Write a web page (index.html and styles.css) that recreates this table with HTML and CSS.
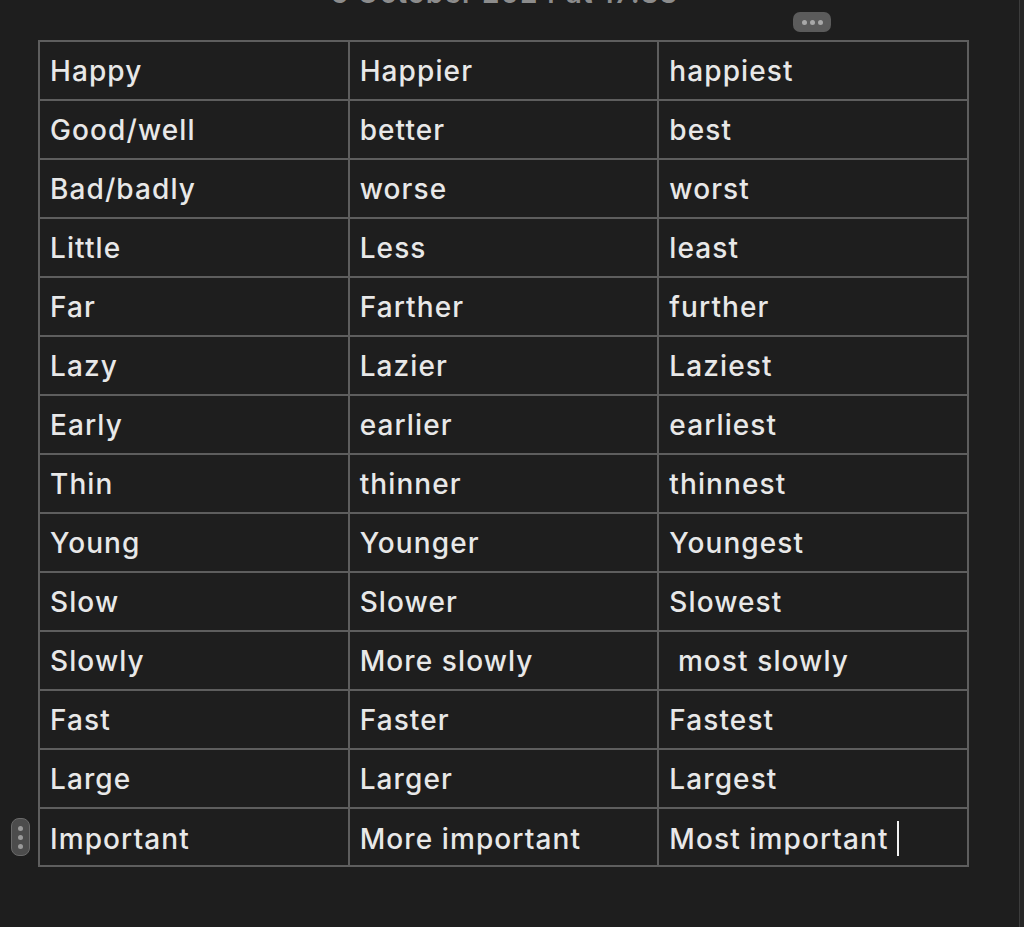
FILE: index.html
```html
<!DOCTYPE html>
<html lang="en">
<head>
<meta charset="utf-8">
<link rel="stylesheet" href="styles.css">
</head>
<body>
<div class="page">
  <div class="note">
    <header class="note-header">
      <div class="date">5 October 2024 at 17:33</div>
      <button class="more" aria-label="More"><span></span><span></span><span></span></button>
    </header>
    <div class="table-wrap">
      <table class="words">
        <tbody>
          <tr><td>Happy</td><td>Happier</td><td>happiest</td></tr>
          <tr><td>Good/well</td><td>better</td><td>best</td></tr>
          <tr><td>Bad/badly</td><td>worse</td><td>worst</td></tr>
          <tr><td>Little</td><td>Less</td><td>least</td></tr>
          <tr><td>Far</td><td>Farther</td><td>further</td></tr>
          <tr><td>Lazy</td><td>Lazier</td><td>Laziest</td></tr>
          <tr><td>Early</td><td>earlier</td><td>earliest</td></tr>
          <tr><td>Thin</td><td>thinner</td><td>thinnest</td></tr>
          <tr><td>Young</td><td>Younger</td><td>Youngest</td></tr>
          <tr><td>Slow</td><td>Slower</td><td>Slowest</td></tr>
          <tr><td>Slowly</td><td>More slowly</td><td>&nbsp;most slowly</td></tr>
          <tr><td>Fast</td><td>Faster</td><td>Fastest</td></tr>
          <tr><td>Large</td><td>Larger</td><td>Largest</td></tr>
          <tr class="active"><td class="first"><span class="handle"><span></span><span></span><span></span></span>Important</td><td>More important</td><td>Most important <span class="caret"></span></td></tr>
        </tbody>
      </table>
    </div>
  </div>
  <div class="scroll-edge"></div>
</div>
</body>
</html>
```

FILE: styles.css
```css
* { box-sizing: border-box; }
html, body {
  margin: 0;
  padding: 0;
  background: #1e1e1e;
  height: 100%;
}
body {
  font-family: Inter, "Noto Sans", "Liberation Sans", sans-serif;
  color: #e6e6e6;
  overflow: hidden;
}
.page {
  display: flex;
  height: 927px;
}
.note {
  flex: 1;
}
.scroll-edge {
  width: 5px;
  background: #262626;
  border-left: 1px solid #3c3c3c;
}
.note-header {
  position: relative;
  height: 40px;
  overflow: hidden;
}
.date {
  text-align: center;
  font-size: 28px;
  font-weight: 600;
  letter-spacing: 1px;
  color: #8c8c8c;
  line-height: 26px;
  margin-top: -20px;
  padding-right: 10px;
}
.more {
  position: absolute;
  left: 793px;
  top: 12px;
  width: 38px;
  height: 20px;
  border: none;
  border-radius: 7px;
  background: #5b5b5b;
  padding: 0;
  display: flex;
  align-items: center;
  justify-content: center;
  gap: 3px;
}
.more span {
  width: 5px;
  height: 5px;
  border-radius: 50%;
  background: #a8a8a8;
}
.table-wrap {
  padding-left: 38px;
}
.words {
  border-collapse: collapse;
  table-layout: fixed;
  width: 931px;
}
.words td {
  border: 2px solid #5e5e5e;
  height: 59px;
  padding: 0 8px 0 10px;
  font-size: 28px;
  font-weight: 500;
  letter-spacing: 1.1px;
  line-height: 30px;
  white-space: nowrap;
  color: #e8e8e8;
}
.words tr.active td {
  height: 58px;
  padding-top: 4px;
}
.first {
  position: relative;
}
.handle {
  position: absolute;
  left: -29px;
  top: 9px;
  width: 19px;
  height: 38px;
  border-radius: 8px;
  background: #4c4c4c;
  border: 1px solid #6a6a6a;
  display: flex;
  flex-direction: column;
  align-items: center;
  justify-content: center;
  gap: 4px;
}
.handle span {
  width: 5px;
  height: 5px;
  border-radius: 50%;
  background: #9a9a9a;
}
.caret {
  display: inline-block;
  width: 2px;
  height: 35px;
  margin: -4px 0 -4px 0;
  background: #f2f2f2;
  vertical-align: -3px;
}
```
